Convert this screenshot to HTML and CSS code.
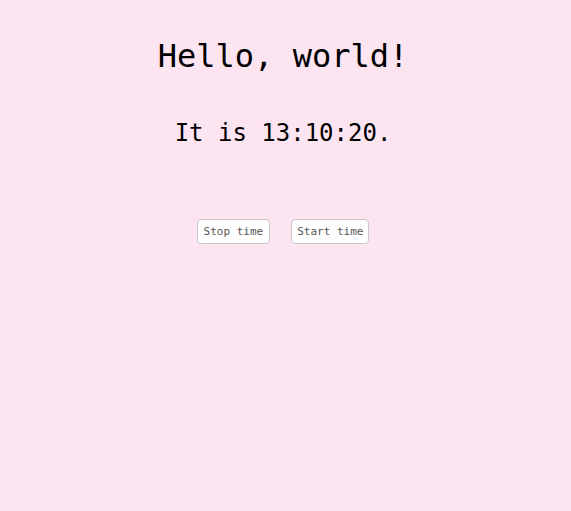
FILE: index.html
```html
<!DOCTYPE html>
<html>
<head>
<meta charset="utf-8">
<link rel="stylesheet" href="styles.css">
</head>
<body>
<main class="app">
  <h1 class="title">Hello, world!</h1>
  <h2 class="clock">It is 13:10:20.</h2>
  <div class="controls">
    <button class="btn">Stop time</button>
    <button class="btn">Start time</button>
  </div>
</main>
</body>
</html>
```
FILE: styles.css
```css
html, body {
  margin: 0;
  background: #fde4f1;
}
body {
  font-family: "DejaVu Sans Mono", monospace;
  color: #000;
  padding: 8px 5px 0 0;
}
.app {
  display: flex;
  flex-direction: column;
  align-items: center;
}
.title {
  font-size: 32px;
  font-weight: normal;
  margin: 28px 0 0;
  line-height: 40px;
}
.clock {
  font-size: 24px;
  font-weight: normal;
  margin: 42px 0 0;
  line-height: 30px;
}
.controls {
  display: flex;
  gap: 21px;
  margin-top: 71px;
}
.btn {
  font-family: "DejaVu Sans Mono", monospace;
  font-size: 11px;
  color: #555;
  background: #fff;
  border: 1px solid #c8c8c8;
  border-radius: 4px;
  height: 25px;
  padding: 0 5px;
}
.btn:first-child {
  padding: 0 6px;
}
```
